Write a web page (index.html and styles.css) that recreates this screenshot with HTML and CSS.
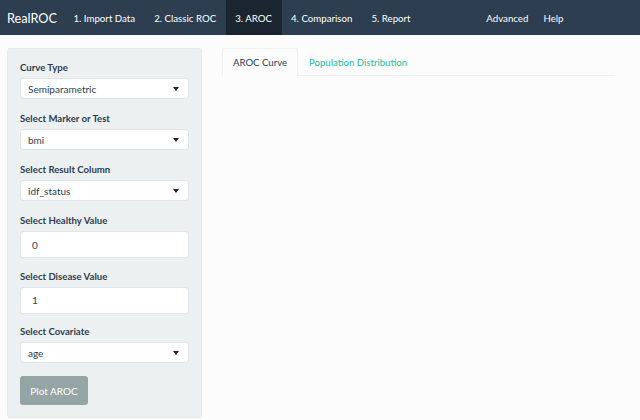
FILE: index.html
```html
<!DOCTYPE html>
<html>
<head>
<meta charset="utf-8">
<link rel="stylesheet" href="styles.css">
</head>
<body>
<nav class="navbar">
  <span class="brand">RealROC</span>
  <ul class="nav">
    <li>1. Import Data</li>
    <li>2. Classic ROC</li>
    <li class="active">3. AROC</li>
    <li>4. Comparison</li>
    <li>5. Report</li>
  </ul>
  <ul class="nav nav-right">
    <li>Advanced</li>
    <li>Help</li>
  </ul>
</nav>
<div class="page">
  <aside class="well">
    <div class="group sel">
      <label>Curve Type</label>
      <div class="select">Semiparametric<span class="caret"></span></div>
    </div>
    <div class="group sel">
      <label>Select Marker or Test</label>
      <div class="select">bmi<span class="caret"></span></div>
    </div>
    <div class="group sel">
      <label>Select Result Column</label>
      <div class="select">idf_status<span class="caret"></span></div>
    </div>
    <div class="group inp">
      <label>Select Healthy Value</label>
      <div class="input">0</div>
    </div>
    <div class="group inp">
      <label>Select Disease Value</label>
      <div class="input">1</div>
    </div>
    <div class="group sel last">
      <label>Select Covariate</label>
      <div class="select">age<span class="caret"></span></div>
    </div>
    <button class="btn">Plot AROC</button>
  </aside>
  <main class="main">
    <ul class="tabs">
      <li class="tab active">AROC Curve</li>
      <li class="tab">Population Distribution</li>
    </ul>
  </main>
</div>
</body>
</html>
```
FILE: styles.css
```css
* { box-sizing: border-box; }
html, body { margin: 0; padding: 0; }
body {
  background: #fcfcfd;
  font-family: Lato, "Open Sans", sans-serif;
  color: #2c3e50;
  font-size: 9.6px;
}
ul { list-style: none; margin: 0; padding: 0; }
.navbar {
  height: 35px;
  background: #2c3e50;
  display: flex;
  align-items: stretch;
  color: #fff;
  white-space: nowrap;
}
.brand {
  font-size: 12.7px;
  padding: 0 7px 0 7px;
  display: flex;
  align-items: center;
}
.nav { display: flex; }
.nav li {
  display: flex;
  align-items: center;
  padding: 0 9.5px;
  font-size: 9.7px;
}
.nav li.active { background: #1a252f; }
.nav-right { margin-left: auto; margin-right: 69px; }
.nav-right li { padding: 0 7.5px; }

.page {
  display: flex;
  padding: 13px 0 0 7px;
  gap: 20px;
}
.well {
  width: 195px;
  height: 370px;
  background: #ecf0f1;
  border: 1px solid #e6eaeb;
  border-radius: 3px;
  padding: 11px 12px;
  flex: none;
}
.group label {
  display: block;
  font-weight: bold;
  font-size: 9.6px;
  line-height: 15px;
  margin-bottom: 3px;
}
.group.sel { margin-bottom: 12px; }
.group.inp { margin-bottom: 10.5px; }
.group.last { margin-bottom: 13px; }
.select, .input {
  background: #fff;
  border: 1px solid #dce4ec;
  border-radius: 3px;
  font-size: 10px;
  color: #2c3e50;
  display: flex;
  align-items: center;
  position: relative;
}
.select { height: 21px; padding-left: 7px; }
.input { height: 27px; padding-left: 11px; }
.caret {
  position: absolute;
  right: 9px;
  top: 8px;
  width: 0; height: 0;
  border-left: 3.5px solid transparent;
  border-right: 3.5px solid transparent;
  border-top: 4px solid #222;
}
.btn {
  width: 68px;
  height: 29px;
  border: none;
  border-radius: 3px;
  background: #95a5a6;
  color: #fff;
  font-family: Lato, sans-serif;
  font-size: 10px;
  padding: 0;
}
.main { width: 393px; }
.tabs {
  display: flex;
  border-bottom: 1px solid #ecf0f1;
  height: 28px;
}
.tab {
  padding: 0 10px;
  display: flex;
  align-items: center;
  font-size: 9.6px;
  color: #18bc9c;
  border: 1px solid transparent;
  margin-bottom: -1px;
  border-radius: 3px 3px 0 0;
}
.tab.active {
  color: #2c3e50;
  background: #fcfcfd;
  border-color: #ecf0f1 #ecf0f1 transparent;
}
```
